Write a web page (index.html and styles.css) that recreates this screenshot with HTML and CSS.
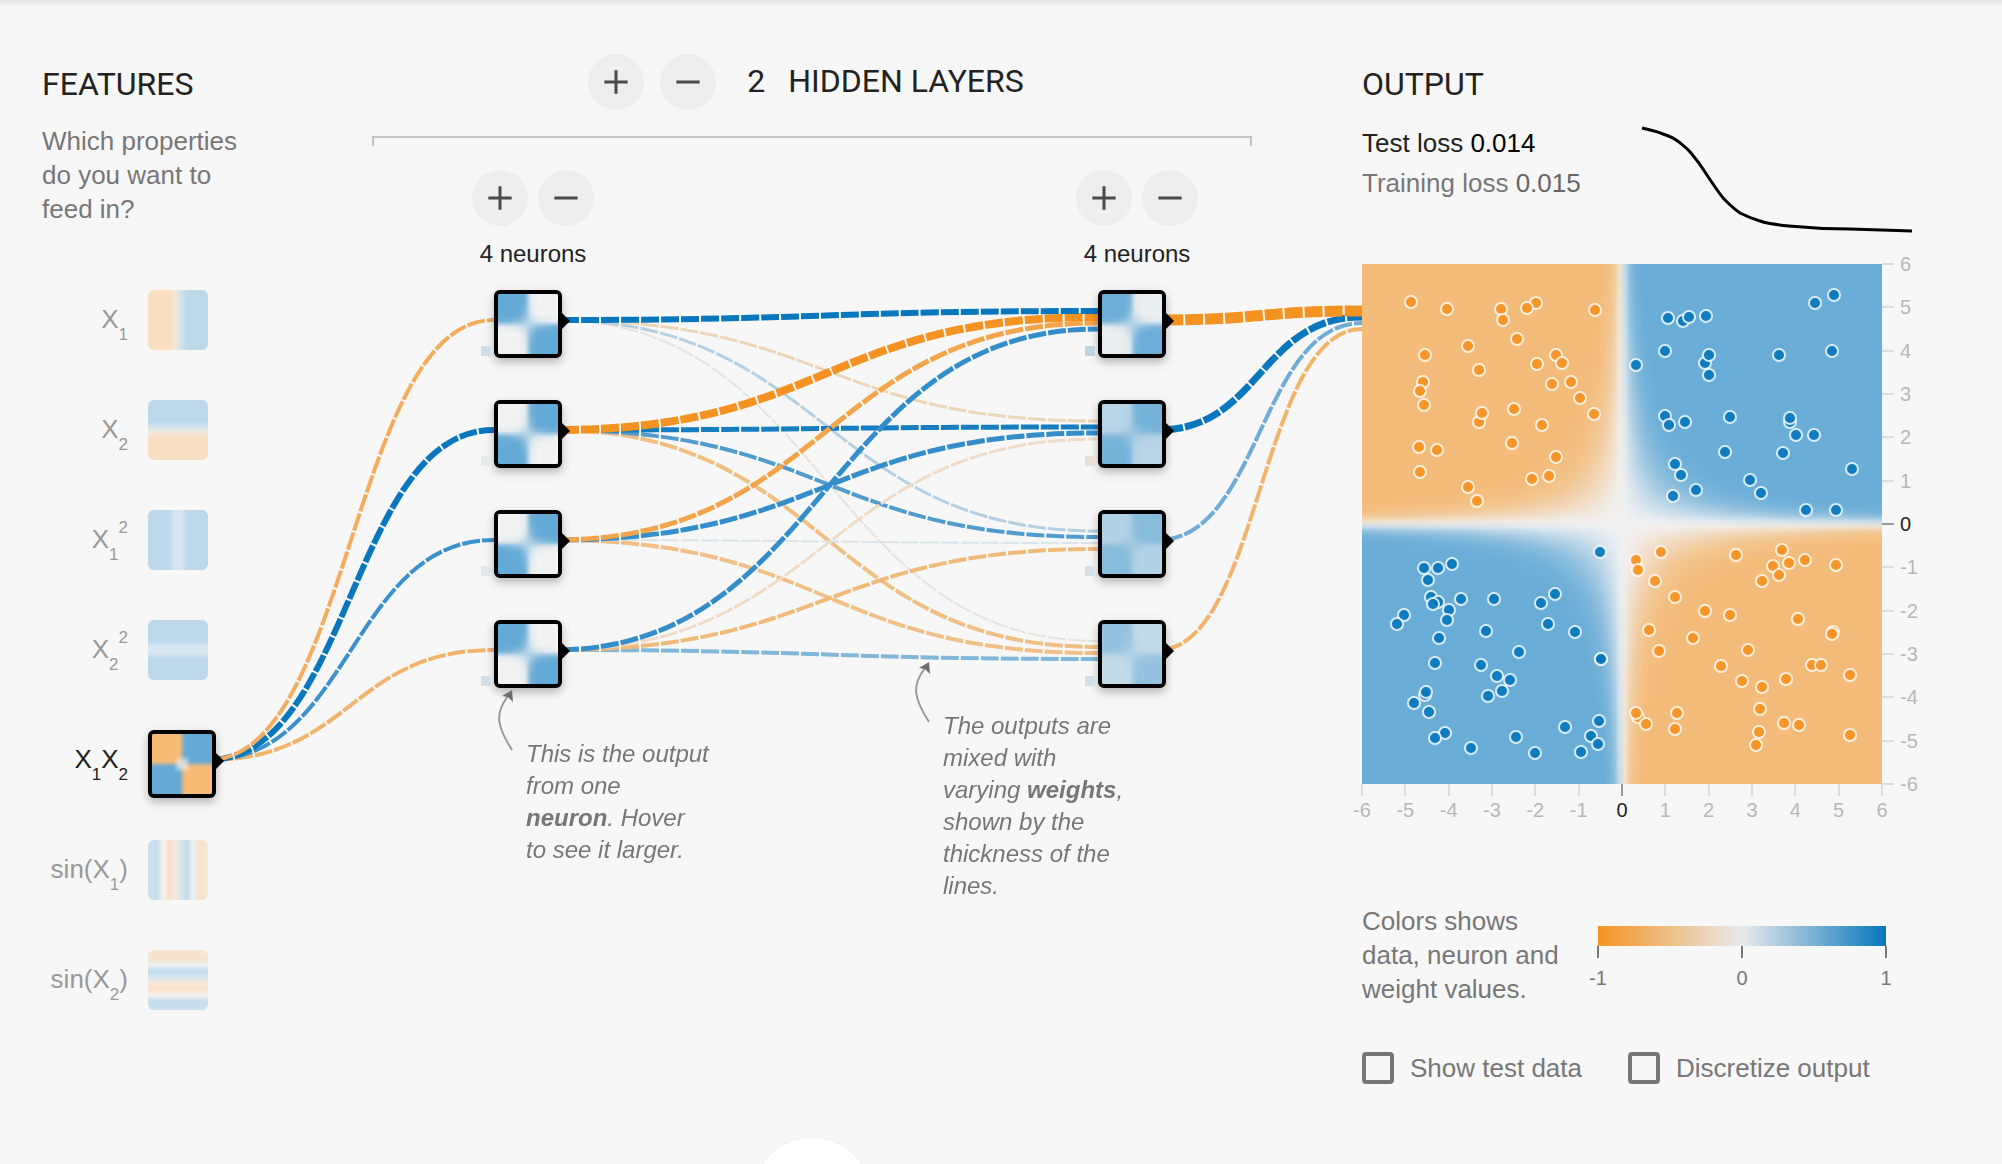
FILE: index.html
```html
<!DOCTYPE html>
<html lang="en">
<head>
<meta charset="utf-8">
<meta name="viewport" content="width=device-width, initial-scale=1">
<title>Neural Network Playground</title>
<link rel="stylesheet" href="styles.css">
</head>
<body>
<svg class="symbols" aria-hidden="true">
  <symbol id="icon-add" viewBox="0 0 24 24"><path d="M19 12.9h-6.1V19h-1.8v-6.1H5v-1.8h6.1V5h1.8v6.1H19z"/></symbol>
  <symbol id="icon-remove" viewBox="0 0 24 24"><path d="M19 12.9H5v-1.8h14z"/></symbol>
  <symbol id="icon-arrow" viewBox="0 0 20 64"><path class="arrow-line" d="M16 62C0 37 -1 25 12 8"/><path class="arrow-head" d="M16 2L6 8l6 1 5 5z"/></symbol>
</svg>
<main class="playground" id="playground">
  <svg class="links" id="links" aria-hidden="true"></svg>

  <section class="features">
    <h2 class="title">Features</h2>
    <p class="text features-intro">Which properties<br>do you want to<br>feed in?</p>
    <ul class="feature-list">
      <li class="feature"><span class="feature-label" id="f1">X<sub>1</sub></span><button class="tile" type="button" aria-labelledby="f1"><canvas data-map="x"></canvas></button></li>
      <li class="feature"><span class="feature-label" id="f2">X<sub>2</sub></span><button class="tile" type="button" aria-labelledby="f2"><canvas data-map="y"></canvas></button></li>
      <li class="feature"><span class="feature-label" id="f3">X<sub>1</sub><sup>2</sup></span><button class="tile" type="button" aria-labelledby="f3"><canvas data-map="xx"></canvas></button></li>
      <li class="feature"><span class="feature-label" id="f4">X<sub>2</sub><sup>2</sup></span><button class="tile" type="button" aria-labelledby="f4"><canvas data-map="yy"></canvas></button></li>
      <li class="feature active"><span class="feature-label" id="f5">X<sub>1</sub>X<sub>2</sub></span><button class="node" type="button" aria-labelledby="f5" data-input><canvas data-map="xy"></canvas></button></li>
      <li class="feature"><span class="feature-label" id="f6">sin(X<sub>1</sub>)</span><button class="tile" type="button" aria-labelledby="f6"><canvas data-map="sinx"></canvas></button></li>
      <li class="feature"><span class="feature-label" id="f7">sin(X<sub>2</sub>)</span><button class="tile" type="button" aria-labelledby="f7"><canvas data-map="siny"></canvas></button></li>
    </ul>
  </section>

  <section class="hidden-layers">
    <header class="layers-header">
      <button class="round" type="button" aria-label="Add layer"><svg><use href="#icon-add"/></svg></button>
      <button class="round" type="button" aria-label="Remove layer"><svg><use href="#icon-remove"/></svg></button>
      <h2 class="title layers-title"><span>2</span><span>Hidden layers</span></h2>
    </header>
    <div class="bracket"></div>
    <div class="layers">
      <div class="layer">
        <div class="layer-controls">
          <button class="round" type="button" aria-label="Add neuron"><svg><use href="#icon-add"/></svg></button>
          <button class="round" type="button" aria-label="Remove neuron"><svg><use href="#icon-remove"/></svg></button>
        </div>
        <p class="neuron-count">4 neurons</p>
        <div class="nodes">
          <div class="node" data-layer="1"><i class="bias b1"></i><canvas data-map="neuron" data-sign="-1" data-low="0" data-high="1"></canvas></div>
          <div class="node" data-layer="1"><i class="bias b2"></i><canvas data-map="neuron" data-sign="1" data-low="0" data-high="1"></canvas></div>
          <div class="node" data-layer="1"><i class="bias b3"></i><canvas data-map="neuron" data-sign="1" data-low="0" data-high="1"></canvas></div>
          <div class="node" data-layer="1"><i class="bias b4"></i><canvas data-map="neuron" data-sign="-1" data-low="0" data-high="1"></canvas></div>
        </div>
        <div class="callout callout-neuron">
          <svg class="arrow" aria-hidden="true"><use href="#icon-arrow"/></svg>
          <p>This is the output<br>from one<br><b>neuron</b>. Hover<br>to see it larger.</p>
        </div>
      </div>
      <div class="layer">
        <div class="layer-controls">
          <button class="round" type="button" aria-label="Add neuron"><svg><use href="#icon-add"/></svg></button>
          <button class="round" type="button" aria-label="Remove neuron"><svg><use href="#icon-remove"/></svg></button>
        </div>
        <p class="neuron-count">4 neurons</p>
        <div class="nodes">
          <div class="node" data-layer="2"><i class="bias b5"></i><canvas data-map="neuron" data-sign="-1" data-low="0.05" data-high="0.94"></canvas></div>
          <div class="node" data-layer="2"><i class="bias b6"></i><canvas data-map="neuron" data-sign="1" data-low="0.4" data-high="0.87"></canvas></div>
          <div class="node" data-layer="2"><i class="bias b7"></i><canvas data-map="neuron" data-sign="1" data-low="0.44" data-high="0.75"></canvas></div>
          <div class="node" data-layer="2"><i class="bias b4"></i><canvas data-map="neuron" data-sign="-1" data-low="0.32" data-high="0.66"></canvas></div>
        </div>
      </div>
      <div class="callout callout-weights">
        <svg class="arrow" aria-hidden="true"><use href="#icon-arrow"/></svg>
        <p>The outputs are<br>mixed with<br>varying <b>weights</b>,<br>shown by the<br>thickness of the<br>lines.</p>
      </div>
    </div>
  </section>

  <section class="output">
    <h2 class="title">Output</h2>
    <div class="metrics">
      <div class="losses">
        <p class="test-loss">Test loss <span>0.014</span></p>
        <p class="training-loss">Training loss <span>0.015</span></p>
      </div>
      <svg class="loss-chart" viewBox="0 0 270 106" role="img" aria-label="Loss over time">
        <path d="M0 2C8 4 14 5 21 8C27 10 32 12 37 16C42 20 45 22 49 27C55 34 60 41 65 49C71 58 76 66 82 73C87 78 92 83 98 87C104 90 111 93 118 95C127 98 136 99 147 100C167 102 188 103 208 103L270 105"/>
      </svg>
    </div>
    <div class="heatmap">
      <div class="heatmap-plot" id="plot">
        <canvas id="heat" data-map="output"></canvas>
        <svg class="points" id="points" viewBox="0 0 520 520" role="img" aria-label="Training data"></svg>
      </div>
      <ul class="axis axis-y"><li>6</li><li>5</li><li>4</li><li>3</li><li>2</li><li>1</li><li class="zero">0</li><li>-1</li><li>-2</li><li>-3</li><li>-4</li><li>-5</li><li>-6</li></ul>
      <ul class="axis axis-x"><li>-6</li><li>-5</li><li>-4</li><li>-3</li><li>-2</li><li>-1</li><li class="zero">0</li><li>1</li><li>2</li><li>3</li><li>4</li><li>5</li><li>6</li></ul>
    </div>
    <div class="legend">
      <p class="text">Colors shows<br>data, neuron and<br>weight values.</p>
      <div class="scale">
        <div class="scale-bar"></div>
        <ul class="axis axis-x scale-axis"><li>-1</li><li>0</li><li>1</li></ul>
      </div>
    </div>
    <div class="options">
      <label class="option"><input type="checkbox">Show test data</label>
      <label class="option"><input type="checkbox">Discretize output</label>
    </div>
  </section>
</main>
<footer class="more"><a class="more-link" href="#article" aria-label="Read more"></a></footer>
<script src="script.js"></script>
</body>
</html>
```
FILE: styles.css
```css
:root {
  --ink: #222;
  --muted: #777;
  --page: #f7f7f7;
}

* { box-sizing: border-box; }

body {
  margin: 0;
  min-height: 100vh;
  display: flex;
  flex-direction: column;
  background: linear-gradient(#e3e3e3, var(--page) 8px) no-repeat var(--page);
  color: var(--ink);
  font-family: "Liberation Sans", Arial, sans-serif;
  font-size: 26px;
  line-height: 34px;
}

h2, p, ul { margin: 0; padding: 0; }
ul { list-style: none; }
button { padding: 0; border: 0; font: inherit; cursor: pointer; }
canvas { display: block; width: 100%; height: 100%; }
.symbols { position: absolute; width: 0; height: 0; }

.playground {
  position: relative;
  display: flex;
  align-items: flex-start;
  padding: 54px 42px 0;
}

.links {
  position: absolute;
  top: 0;
  left: 0;
  width: 100%;
  height: 100%;
  fill: none;
}

.title {
  font: 400 32px/40px Roboto, sans-serif;
  text-transform: uppercase;
}

.text { color: var(--muted); }

/* Features */
.features {
  flex: none;
  width: 210px;
  margin-right: 120px;
  padding-top: 10px;
}

.features-intro { margin: 20px 0 64px; }

.feature-list {
  width: 174px;
  display: grid;
  grid-auto-rows: 110px;
}

.feature {
  display: grid;
  grid-template-columns: 1fr 68px;
  gap: 20px;
  align-items: start;
}

.feature-label {
  padding-top: 12px;
  color: #999;
  text-align: right;
  white-space: nowrap;
}

.feature.active .feature-label { color: var(--ink); }

.feature-label sub,
.feature-label sup {
  font-size: 17px;
  line-height: 0;
}

.feature-label sub { vertical-align: -12px; }
.feature-label sup { vertical-align: 15px; }

.tile {
  width: 60px;
  height: 60px;
  border-radius: 6px;
  overflow: hidden;
  background: #fff;
  opacity: .4;
}

.node {
  position: relative;
  width: 68px;
  height: 68px;
  border: 4px solid #000;
  border-radius: 6px;
  background: #fff;
  box-shadow: 0 4px 10px rgba(0, 0, 0, .28);
}

.node::after {
  content: "";
  position: absolute;
  top: 18px;
  left: 63px;
  border: 9px solid transparent;
  border-left-color: #000;
  border-right-width: 0;
}

/* Hidden layers */
.hidden-layers { flex: 1; }

.layers-header {
  display: flex;
  justify-content: center;
  align-items: center;
  gap: 16px;
  padding-right: 12px;
}

.layers-title {
  display: flex;
  gap: 23px;
  margin-left: 15px;
  padding-bottom: 2px;
}

.round {
  display: grid;
  place-items: center;
  width: 56px;
  height: 56px;
  border-radius: 50%;
  background: #eee;
}

.round svg { width: 40px; height: 40px; fill: #4a4a4a; }

.bracket {
  height: 10px;
  margin: 26px 0 24px;
  border: 2px solid #c4c4c4;
  border-bottom: 0;
}

.layers {
  position: relative;
  display: flex;
  justify-content: space-between;
  padding: 0 54px 0 100px;
}

.layer { position: relative; width: 122px; }
.layer-controls { display: flex; gap: 10px; }

.neuron-count {
  margin: 12px 0 20px;
  font-size: 24px;
  line-height: 32px;
  text-align: center;
}

.nodes {
  display: grid;
  gap: 42px;
  padding-left: 22px;
}

.bias {
  position: absolute;
  top: 52px;
  left: -17px;
  width: 10px;
  height: 10px;
}

.b1 { background: #cfdde8; }
.b2 { background: #e6eaea; }
.b3 { background: #dfe7e9; }
.b4 { background: #d2dfe8; }
.b5 { background: #bdd5e3; }
.b6 { background: #e9e0d6; }
.b7 { background: #d4e1e8; }

.callout {
  position: absolute;
  display: flex;
  gap: 10px;
  color: var(--muted);
  font-size: 24px;
  font-style: italic;
  line-height: 32px;
  white-space: nowrap;
}

.callout p { padding-top: 50px; }
.callout-neuron { top: 100%; left: 24px; }
.callout-weights { top: 490px; left: calc(50% + 101px); }
.arrow { flex: none; width: 20px; height: 64px; overflow: visible; }
.arrow-line { fill: none; stroke: #999; stroke-width: 2; }
.arrow-head { fill: #6e6e6e; }

/* Output */
.output {
  position: relative;
  flex: none;
  width: 598px;
  margin-left: 110px;
  padding-top: 10px;
}

.metrics {
  display: flex;
  height: 141px;
  margin-top: 19px;
  line-height: 40px;
}

.losses { flex: 0 0 280px; }
.test-loss span { color: #000; }
.training-loss { color: var(--muted); }
.training-loss span { color: #666; }

.loss-chart {
  width: 270px;
  height: 106px;
  margin-top: 3px;
  overflow: visible;
  fill: none;
  stroke: #000;
  stroke-width: 3;
}

.heatmap {
  display: grid;
  grid-template-columns: 520px auto;
}

.heatmap-plot {
  position: relative;
  height: 520px;
  background: #fff;
}

.points {
  position: absolute;
  top: 0;
  left: 0;
  width: 100%;
  height: 100%;
}

.points circle { stroke: #fff; stroke-width: 2; stroke-opacity: .8; fill-opacity: .92; }
.point-positive { fill: #0877bd; }
.point-negative { fill: #f59322; }

.axis {
  display: flex;
  justify-content: space-between;
  color: #b8b8b8;
  font-size: 20px;
  line-height: 24px;
}

.axis li { display: flex; align-items: center; }
.axis li::before { content: ""; flex: none; background: #ddd; }
.axis .zero { color: var(--ink); }
.axis .zero::before { background: #999; }

.axis-y { flex-direction: column; }
.axis-y li { height: 0; gap: 6px; }
.axis-y li::before { width: 12px; height: 2px; }

.axis-x li { flex-direction: column; width: 0; gap: 2px; white-space: nowrap; }
.axis-x li::before { width: 2px; height: 12px; }

.legend {
  display: flex;
  margin-top: 82px;
}

.legend .text { flex: 0 0 236px; }
.scale { width: 288px; padding-top: 22px; }

.scale-bar {
  height: 20px;
  background: linear-gradient(to right, #f59322, #e8eaeb, #0877bd);
}

.scale-axis { color: var(--muted); }
.scale-axis li { gap: 8px; }
.scale-axis li::before { background: var(--muted); }

.options {
  display: flex;
  gap: 46px;
  margin-top: 46px;
  color: var(--muted);
  line-height: 32px;
}

.option {
  display: flex;
  align-items: center;
  gap: 16px;
  white-space: nowrap;
}

.option input {
  appearance: none;
  width: 32px;
  height: 32px;
  margin: 0;
  border: 4px solid var(--muted);
  border-radius: 4px;
}

.option input:checked { background: var(--muted); }

/* Link to the article, peeking over the fold */
.more {
  display: flex;
  justify-content: center;
  height: 32px;
  margin-top: auto;
  padding: 6px 750px 0 372px;
  overflow: hidden;
}

.more-link {
  flex: none;
  width: 120px;
  height: 120px;
  border-radius: 50%;
  background: #fff;
  box-shadow: 0 1px 3px rgba(0, 0, 0, .1);
}
```
FILE: script.js
```javascript
const NEGATIVE = [245, 147, 34];
const ZERO = [232, 234, 235];
const POSITIVE = [8, 119, 189];
const OUTPUT_NEGATIVE = [237, 145, 36];
const DENSITY = 100;

const clamp = v => Math.max(-1, Math.min(1, v));
const sigmoid = v => 1 / (1 + Math.exp(-v));

const MAPS = {
  x: x => x,
  y: (x, y) => y,
  xx: x => x * x,
  yy: (x, y) => y * y,
  xy: (x, y) => x * y,
  sinx: x => Math.sin(x),
  siny: (x, y) => Math.sin(y),
  neuron: (x, y, d) => +d.low + (d.high - d.low) * sigmoid(1.3 * d.sign * x * y - 0.3),
  output: (x, y) => 0.96 * Math.tanh(0.9 * x * y)
};

function paint(canvas) {
  const isOutput = canvas.dataset.map === 'output';
  const fn = MAPS[canvas.dataset.map];
  const size = isOutput ? DENSITY : 10;
  const step = DENSITY / size;
  canvas.width = canvas.height = size;
  const ctx = canvas.getContext('2d');
  const image = ctx.createImageData(size, size);
  for (let j = 0; j < size; j++) {
    for (let i = 0; i < size; i++) {
      let sum = 0;
      for (let b = 0; b < step; b++) {
        for (let a = 0; a < step; a++) {
          const x = (i * step + a + 0.5) / DENSITY * 12 - 6;
          const y = 6 - (j * step + b + 0.5) / DENSITY * 12;
          sum += fn(x, y, canvas.dataset);
        }
      }
      const v = clamp(sum / (step * step));
      const end = v > 0 ? POSITIVE : isOutput ? OUTPUT_NEGATIVE : NEGATIVE;
      const p = (j * size + i) * 4;
      for (let c = 0; c < 3; c++) {
        image.data[p + c] = ZERO[c] + (end[c] - ZERO[c]) * Math.abs(v);
      }
      image.data[p + 3] = 160;
    }
  }
  ctx.putImageData(image, 0, 0);
}

document.querySelectorAll('canvas').forEach(paint);

// Weights, one row per destination node: [colour, width] for each source node.
const INPUT_WEIGHTS = [
  [['#f4ad5e', 4]], [['#0877bd', 6]], [['#3a91cb', 4]], [['#f2b46d', 4]]
];
const HIDDEN_WEIGHTS = [
  [['#0877bd', 6], ['#f59322', 8], ['#f3a54b', 5], ['#338ec9', 5]],
  [['#edd6b8', 3], ['#167dc0', 5], ['#338ec9', 5], ['#eedcc8', 3]],
  [['#b4d0e2', 3], ['#519bcd', 4], ['#dae4ea', 2], ['#f0ba7b', 4]],
  [['#e8e3dd', 2], ['#f0bf85', 4], ['#f0c088', 4], ['#83b7d9', 4]]
];
const OUTPUT_WEIGHTS = [
  [['#f59322', 11], ['#0877bd', 7], ['#6fadd6', 4], ['#f2b46d', 4]]
];

const SVG = 'http://www.w3.org/2000/svg';
const playground = document.getElementById('playground');
const links = document.getElementById('links');
const anchors = selector => [...document.querySelectorAll(selector)].map(el => {
  const box = el.getBoundingClientRect();
  const base = playground.getBoundingClientRect();
  return { x: box.left - base.left, y: box.top - base.top + 30 };
});

function connect(sources, targets, weights) {
  targets.forEach((target, t) => sources.forEach((source, s) => {
    const [color, width] = weights[t][s];
    const x0 = source.x + 60;
    const x1 = target.x;
    const y1 = target.y + (s - (sources.length - 1) / 2) / sources.length * 24;
    const mid = (x0 + x1) / 2;
    const path = document.createElementNS(SVG, 'path');
    path.setAttribute('d', `M${x0},${source.y}C${mid},${source.y} ${mid},${y1} ${x1},${y1}`);
    path.setAttribute('stroke', color);
    path.setAttribute('stroke-width', width);
    path.setAttribute('stroke-dasharray', '18 2');
    path.setAttribute('stroke-dashoffset', '-7');
    links.prepend(path);
  }));
}

function drawLinks() {
  links.replaceChildren();
  const input = anchors('[data-input]');
  const first = anchors('[data-layer="1"]');
  const second = anchors('[data-layer="2"]');
  const output = [{ x: anchors('#plot')[0].x, y: second[0].y }];
  connect(input, first, INPUT_WEIGHTS);
  connect(first, second, HIDDEN_WEIGHTS);
  connect(second, output, OUTPUT_WEIGHTS);
}

drawLinks();
window.addEventListener('resize', drawLinks);

const NEGATIVE_POINTS = [
  [49,38],[85,45],[139,45],[141,56],[174,39],[165,44],[233,46],[155,75],[106,82],[63,91],[194,91],[200,99],
  [175,100],[117,106],[190,120],[209,118],[218,134],[232,150],[61,118],[58,127],[62,141],[117,158],[120,149],
  [152,145],[180,161],[150,179],[57,183],[75,186],[194,193],[187,212],[170,215],[58,208],[106,223],[115,237],
  [299,288],[274,296],[276,306],[293,317],[374,291],[420,286],[411,302],[427,299],[443,296],[474,301],[417,311],
  [400,317],[313,333],[343,347],[368,351],[436,355],[471,368],[470,370],[287,366],[331,374],[297,387],[386,386],
  [359,402],[450,401],[459,401],[488,411],[380,417],[400,423],[424,415],[398,445],[276,453],[274,449],[284,460],
  [315,449],[313,465],[422,459],[437,461],[397,468],[488,471],[394,481]
];
const POSITIVE_POINTS = [
  [472,31],[453,39],[306,54],[321,57],[327,53],[344,52],[303,87],[274,101],[343,99],[347,91],[347,111],[417,91],
  [470,87],[303,152],[307,161],[323,158],[368,153],[428,158],[428,154],[434,171],[452,171],[363,188],[421,189],
  [490,205],[313,200],[319,211],[388,216],[399,229],[334,226],[311,232],[444,246],[474,246],
  [238,288],[62,304],[76,304],[90,300],[66,316],[69,333],[76,338],[71,340],[99,335],[87,346],[85,356],[132,335],
  [193,330],[179,339],[42,351],[35,360],[186,360],[213,368],[124,367],[77,374],[157,388],[239,395],[239,395],
  [73,399],[119,401],[135,412],[148,416],[140,427],[126,432],[63,431],[64,428],[52,439],[67,448],[203,463],
  [237,457],[229,472],[236,480],[219,488],[154,473],[173,489],[109,484],[83,469],[73,474]
];

function plot(points, className) {
  for (const [cx, cy] of points) {
    const circle = document.createElementNS(SVG, 'circle');
    circle.setAttribute('cx', cx);
    circle.setAttribute('cy', cy);
    circle.setAttribute('r', 6);
    circle.setAttribute('class', className);
    document.getElementById('points').append(circle);
  }
}

plot(NEGATIVE_POINTS, 'point-negative');
plot(POSITIVE_POINTS, 'point-positive');
```
